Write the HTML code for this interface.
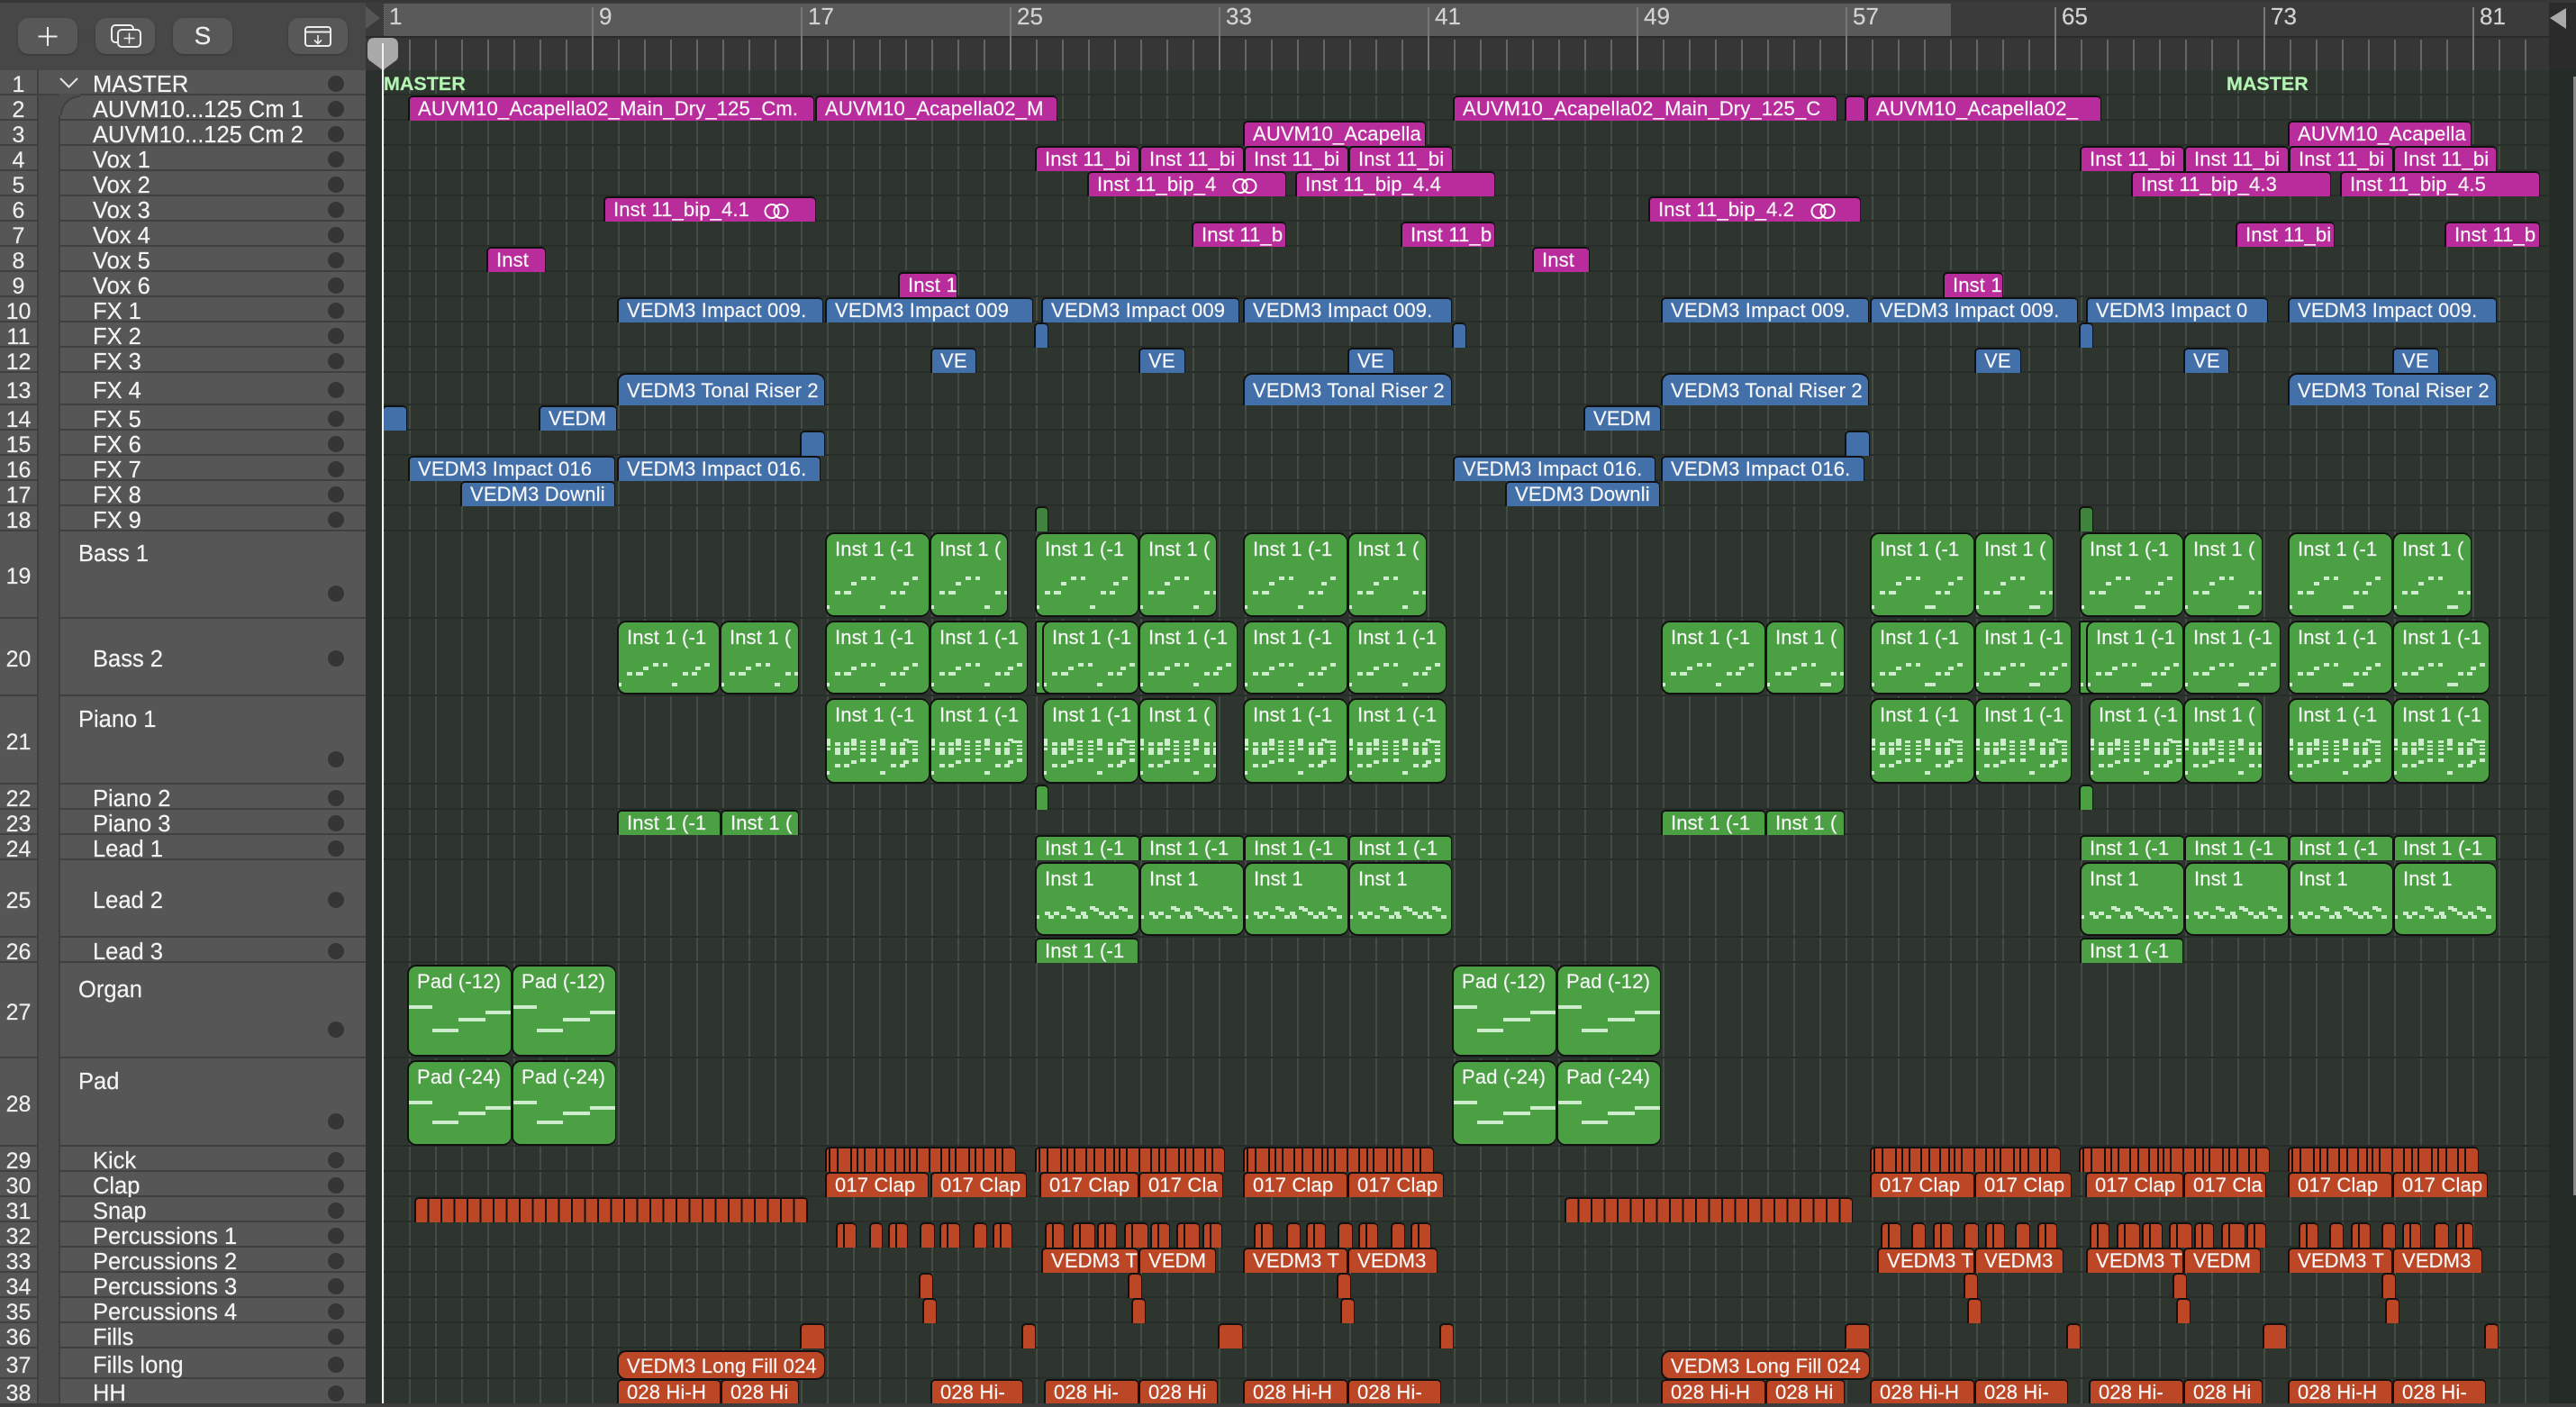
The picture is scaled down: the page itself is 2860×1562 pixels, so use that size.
<!DOCTYPE html>
<html lang="en"><head><meta charset="utf-8"><title>Arrange</title>
<style>
html,body{margin:0;padding:0;background:#3c3c3c}
#p{position:relative;width:2860px;height:1562px;overflow:hidden;background:#2d352e;font-family:"Liberation Sans",sans-serif;color:#f4f4f4;-webkit-text-stroke:.2px currentColor}
#p>*{position:absolute}
.btn{top:20px;width:66px;height:40px;border-radius:12px;background:#585858;box-shadow:0 1px 2px #343434}
.l{position:absolute;left:0;width:406px;box-sizing:border-box;border-bottom:2px solid #404040;background:#565656;font-size:25.5px}
.l s{position:absolute;left:0;width:41px;text-align:center;text-decoration:none;top:2px;color:#eee;font-size:25px}
.l u{position:absolute;left:103px;top:2px;text-decoration:none;white-space:nowrap}
.l u.a{left:87px}
.l em{position:absolute;left:364px;top:calc(50% - 7px);width:18px;height:18px;border-radius:50%;background:#353535}
.n{position:absolute;top:3px;font-size:26px;line-height:30px;color:#d2d2d2}
.tk{position:absolute;top:8px;height:70px;width:2px;background:#777}
.r{position:absolute;left:-1px;right:0;box-sizing:border-box;border-bottom:2px solid #272d28}
.r i{position:absolute;top:0;bottom:-2px;box-sizing:border-box;border:solid #111;border-width:2px 1px 0 2px;border-radius:5px 5px 0 0;font-style:normal;font-size:22px;line-height:26px;padding-left:9px;white-space:nowrap;overflow:hidden;color:#f6f6f6;letter-spacing:.15px}
.r i.t{border-width:2px 1px 2px 2px;border-radius:10px;line-height:34px;bottom:auto}
.r i.u{line-height:35px;border-radius:10px 10px 0 0}
.m{background:#b92c9c}.b{background:#4470aa}.g{background:#4ca044}.o{background:#bb4726}
.pc{background:linear-gradient(90deg,#bb4726 0 6px,#111 6px 8px,#bb4726 8px)}
.nt{position:absolute;left:-2px;top:-2px;width:130px;height:100px}
.lp{position:absolute;top:8px;width:30px;height:17px}
.mt{position:absolute;top:2px;font-size:21.5px;line-height:26px;font-weight:700;color:#b3f5b3}
</style></head><body>
<div id="p">
<svg width="0" height="0" style="position:absolute"><defs>
<path id="B" fill="#cdeccb" d="M0 81h5v4h-5zM61 81h6v4h-6zM11 65h6v4h-6zM21 65h8v4h-8zM29 55h6v4h-6zM40 49h6v4h-6zM51 49h5v4h-5zM73 65h6v4h-6zM83 65h6v4h-6zM87 55h6v4h-6zM97 49h6v4h-6z"/>
<path id="B2" fill="#cdeccb" d="M0 81h5v4h-5zM61 81h12v4h-12zM11 65h6v4h-6zM21 65h8v4h-8zM29 55h6v4h-6zM40 49h6v4h-6zM51 49h5v4h-5zM73 65h6v4h-6zM83 65h6v4h-6zM87 55h6v4h-6zM97 49h6v4h-6z"/>
<path id="C" fill="#cdeccb" d="M0 69h5v4h-5zM61 69h6v4h-6zM11 57h6v4h-6zM21 57h8v4h-8zM29 51h6v4h-6zM40 47h6v4h-6zM51 47h5v4h-5zM73 57h6v4h-6zM83 57h6v4h-6zM87 51h6v4h-6zM97 47h6v4h-6z"/>
<path id="C2" fill="#cdeccb" d="M0 69h5v4h-5zM61 69h12v4h-12zM11 57h6v4h-6zM21 57h8v4h-8zM29 51h6v4h-6zM40 47h6v4h-6zM51 47h5v4h-5zM73 57h6v4h-6zM83 57h6v4h-6zM87 51h6v4h-6zM97 47h6v4h-6z"/>
<path id="P" fill="#cdeccb" d="M2 45h4v8h-4zM2 55h4v3h-4zM11 49h6v4h-6zM11 55h6v8h-6zM21 49h6v4h-6zM21 55h6v8h-6zM29 45h6v8h-6zM29 55h6v3h-6zM39 47h6v3h-6zM39 52h6v2h-6zM39 56h6v2h-6zM39 60h6v3h-6zM51 47h6v3h-6zM51 52h6v2h-6zM51 56h6v2h-6zM51 60h6v3h-6zM61 45h6v8h-6zM61 55h6v3h-6zM73 49h6v4h-6zM73 55h6v8h-6zM83 49h6v4h-6zM83 55h6v8h-6zM87 45h6v3h-6zM91 47h6v3h-6zM97 47h6v3h-6zM97 52h6v2h-6zM97 56h6v2h-6zM97 60h6v3h-6zM11 73h6v4h-6zM21 73h6v4h-6zM29 69h6v4h-6zM39 67h6v4h-6zM51 67h6v4h-6zM73 73h6v4h-6zM83 73h6v4h-6zM87 69h6v4h-6zM97 67h6v4h-6zM0 81h5v4h-5zM61 81h6v4h-6z"/>
<path id="L" fill="#cdeccb" d="M1 59h4v4h-4zM11 55h6v4h-6zM15 59h6v4h-6zM21 55h6v4h-6zM29 59h6v4h-6zM35 49h6v4h-6zM39 51h6v4h-6zM45 59h6v4h-6zM51 55h6v4h-6zM53 59h6v4h-6zM61 49h6v4h-6zM65 51h6v4h-6zM71 55h6v4h-6zM77 59h6v4h-6zM83 55h6v4h-6zM87 59h6v4h-6zM93 49h6v4h-6zM97 51h6v4h-6zM103 59h6v4h-6z"/>
<path id="A" fill="#cdeccb" d="M0 45h28v4H0zM28 71h29v4H28zM57 59h30v4H57zM87 51h28v4H87z"/>
<path id="E" fill="#cdeccb" d="M0 45h28v4H0zM28 67h29v4H28zM57 57h30v4H57zM87 51h28v4H87z"/>
<path id="K" stroke="#111" stroke-width="2" d="M5 0v30M14 0v30M29 0v30M36 0v30M44 0v30M57 0v30M66 0v30M78 0v30M88 0v30M94 0v30M102 0v30M116 0v30M129 0v30M138 0v30M145 0v30M160 0v30M167 0v30M176 0v30M189 0v30M197 0v30"/>
<g id="Q" fill="none" stroke="#fff" stroke-width="2"><circle cx="9" cy="8.500" r="7.500"/><circle cx="19" cy="8.500" r="7.500"/></g>
</defs></svg>

<!-- toolbar -->
<div style="left:0;top:0;width:406px;height:78px;background:#474747"></div>
<div style="left:0;top:0;width:2860px;height:3px;background:#373737"></div>
<div class="btn" style="left:20px"></div>
<div class="btn" style="left:106px"></div>
<div class="btn" style="left:192px"></div>
<div class="btn" style="left:320px"></div>
<svg style="left:0;top:0" width="406" height="78" fill="none" stroke="#ececec" stroke-width="2">
<path d="M42.500 40.500h21M53 30v21"/>
<path d="M148 33v-1a4 4 0 0 0-4-4h-16a4 4 0 0 0-4 4v11a4 4 0 0 0 4 4h3"/>
<rect x="131" y="33" width="25" height="19" rx="4"/>
<path d="M143.500 36.500v12M137.500 42.500h12" stroke-width="1.600"/>
<rect x="339" y="30" width="28" height="21" rx="3"/>
<path d="M339 35.500h28"/>
<path d="M353 39v9M349 44.500l4 4 4-4" stroke-width="1.600"/>
</svg>
<div style="left:192px;top:20px;width:66px;height:40px;line-height:40px;text-align:center;font-size:28px;color:#efefef">S</div>

<!-- ruler -->
<div style="left:406px;top:3px;width:2454px;height:37px;background:#3b3b3b"></div>
<div style="left:425px;top:4px;width:1741px;height:36px;background:#5a5a5a"></div>
<div style="left:406px;top:40px;width:2454px;height:38px;background:#363636;border-top:2px solid #2a2a2a;box-sizing:border-box"></div>
<div style="left:425px;top:44px;width:2406px;height:34px;background:repeating-linear-gradient(90deg,#666 0 2px,transparent 2px 29px)"></div>
<div class="tk" style="left:657px"></div><div class="tk" style="left:889px"></div><div class="tk" style="left:1121px"></div><div class="tk" style="left:1353px"></div><div class="tk" style="left:1585px"></div><div class="tk" style="left:1817px"></div><div class="tk" style="left:2049px"></div><div class="tk" style="left:2281px"></div><div class="tk" style="left:2513px"></div><div class="tk" style="left:2745px"></div>
<span class="n" style="left:432px">1</span><span class="n" style="left:665px">9</span><span class="n" style="left:897px">17</span><span class="n" style="left:1129px">25</span><span class="n" style="left:1361px">33</span><span class="n" style="left:1593px">41</span><span class="n" style="left:1825px">49</span><span class="n" style="left:2057px">57</span><span class="n" style="left:2289px">65</span><span class="n" style="left:2521px">73</span><span class="n" style="left:2753px">81</span>

<!-- grid -->
<div style="left:425px;top:78px;width:2406px;height:1480px;background:repeating-linear-gradient(90deg,#444d45 0 2px,transparent 2px 29px)"></div>

<!-- regions -->
<div class="r" style="top:78px;height:28px"><span class="mt" style="left:427px">MASTER</span><span class="mt" style="left:2473px">MASTER</span></div>
<div class="r" style="top:106px;height:28px"><i class="m" style="left:454px;width:451px">AUVM10_Acapella02_Main_Dry_125_Cm.</i><i class="m" style="left:906px;width:269px">AUVM10_Acapella02_M</i><i class="m" style="left:1614px;width:427px">AUVM10_Acapella02_Main_Dry_125_C</i><i class="m" style="left:2049px;width:23px"></i><i class="m" style="left:2073px;width:261px">AUVM10_Acapella02_</i></div>
<div class="r" style="top:134px;height:28px"><i class="m" style="left:1381px;width:203px">AUVM10_Acapella</i><i class="m" style="left:2541px;width:204px">AUVM10_Acapella</i></div>
<div class="r" style="top:162px;height:28px"><i class="m" style="left:1150px;width:116px">Inst 11_bi</i><i class="m" style="left:1266px;width:116px">Inst 11_bi</i><i class="m" style="left:1382px;width:116px">Inst 11_bi</i><i class="m" style="left:1498px;width:116px">Inst 11_bi</i><i class="m" style="left:2310px;width:116px">Inst 11_bi</i><i class="m" style="left:2426px;width:116px">Inst 11_bi</i><i class="m" style="left:2542px;width:116px">Inst 11_bi</i><i class="m" style="left:2658px;width:115px">Inst 11_bi</i></div>
<div class="r" style="top:190px;height:28px"><i class="m" style="left:1208px;width:221px">Inst 11_bip_4</i><svg class="lp" style="left:1369px"><use href="#Q"/></svg><i class="m" style="left:1439px;width:222px">Inst 11_bip_4.4</i><i class="m" style="left:2367px;width:222px">Inst 11_bip_4.3</i><i class="m" style="left:2599px;width:222px">Inst 11_bip_4.5</i></div>
<div class="r" style="top:218px;height:28px"><i class="m" style="left:671px;width:236px">Inst 11_bip_4.1</i><svg class="lp" style="left:849px"><use href="#Q"/></svg><i class="m" style="left:1831px;width:236px">Inst 11_bip_4.2</i><svg class="lp" style="left:2011px"><use href="#Q"/></svg></div>
<div class="r" style="top:246px;height:28px"><i class="m" style="left:1324px;width:105px">Inst 11_b</i><i class="m" style="left:1556px;width:105px">Inst 11_b</i><i class="m" style="left:2483px;width:110px">Inst 11_bi</i><i class="m" style="left:2715px;width:106px">Inst 11_b</i></div>
<div class="r" style="top:274px;height:28px"><i class="m" style="left:541px;width:66px">Inst</i><i class="m" style="left:1702px;width:64px">Inst</i></div>
<div class="r" style="top:302px;height:28px"><i class="m" style="left:998px;width:66px">Inst 1</i><i class="m" style="left:2158px;width:67px">Inst 1</i></div>
<div class="r" style="top:330px;height:28px"><i class="b" style="left:686px;width:229px">VEDM3 Impact 009.</i><i class="b" style="left:917px;width:231px">VEDM3 Impact 009</i><i class="b" style="left:1157px;width:220px">VEDM3 Impact 009</i><i class="b" style="left:1381px;width:232px">VEDM3 Impact 009.</i><i class="b" style="left:1845px;width:231px">VEDM3 Impact 009.</i><i class="b" style="left:2077px;width:231px">VEDM3 Impact 009.</i><i class="b" style="left:2317px;width:202px">VEDM3 Impact 0</i><i class="b" style="left:2541px;width:232px">VEDM3 Impact 009.</i></div>
<div class="r" style="top:358px;height:28px"><i class="b" style="left:1149px;width:16px"></i><i class="b" style="left:1613px;width:16px"></i><i class="b" style="left:2309px;width:16px"></i></div>
<div class="r" style="top:386px;height:28px"><i class="b" style="left:1034px;width:51px">VE</i><i class="b" style="left:1265px;width:52px">VE</i><i class="b" style="left:1497px;width:52px">VE</i><i class="b" style="left:2193px;width:52px">VE</i><i class="b" style="left:2425px;width:51px">VE</i><i class="b" style="left:2657px;width:52px">VE</i></div>
<div class="r" style="top:414px;height:36px"><i class="b u" style="left:686px;width:231px">VEDM3 Tonal Riser 2</i><i class="b u" style="left:1381px;width:232px">VEDM3 Tonal Riser 2</i><i class="b u" style="left:1845px;width:231px">VEDM3 Tonal Riser 2</i><i class="b u" style="left:2541px;width:232px">VEDM3 Tonal Riser 2</i></div>
<div class="r" style="top:450px;height:28px"><i class="b" style="left:425px;width:28px"></i><i class="b" style="left:599px;width:87px">VEDM</i><i class="b" style="left:1759px;width:86px">VEDM</i></div>
<div class="r" style="top:478px;height:28px"><i class="b" style="left:889px;width:28px"></i><i class="b" style="left:2049px;width:28px"></i></div>
<div class="r" style="top:506px;height:28px"><i class="b" style="left:454px;width:230px">VEDM3 Impact 016</i><i class="b" style="left:686px;width:226px">VEDM3 Impact 016.</i><i class="b" style="left:1614px;width:225px">VEDM3 Impact 016.</i><i class="b" style="left:1845px;width:226px">VEDM3 Impact 016.</i></div>
<div class="r" style="top:534px;height:28px"><i class="b" style="left:512px;width:172px">VEDM3 Downli</i><i class="b" style="left:1672px;width:172px">VEDM3 Downli</i></div>
<div class="r" style="top:562px;height:28px"><i class="g" style="left:1150px;width:15px;background:#3f833c"></i><i class="g" style="left:2309px;width:16px;background:#3f833c"></i></div>

<div class="r" style="top:590px;height:97px">
<i class="g t" style="left:917px;width:116px;top:1px;height:94px">Inst 1 (-1<svg class="nt"><use href="#B"/></svg></i>
<i class="g t" style="left:1033px;width:87px;top:1px;height:94px">Inst 1 (<svg class="nt"><use href="#B"/></svg></i>
<i class="g t" style="left:1150px;width:115px;top:1px;height:94px">Inst 1 (-1<svg class="nt"><use href="#B"/></svg></i>
<i class="g t" style="left:1265px;width:87px;top:1px;height:94px">Inst 1 (<svg class="nt"><use href="#B"/></svg></i>
<i class="g t" style="left:1381px;width:116px;top:1px;height:94px">Inst 1 (-1<svg class="nt"><use href="#B"/></svg></i>
<i class="g t" style="left:1497px;width:88px;top:1px;height:94px">Inst 1 (<svg class="nt"><use href="#B"/></svg></i>
<i class="g t" style="left:2077px;width:116px;top:1px;height:94px">Inst 1 (-1<svg class="nt"><use href="#B2"/></svg></i>
<i class="g t" style="left:2193px;width:88px;top:1px;height:94px">Inst 1 (<svg class="nt"><use href="#B2"/></svg></i>
<i class="g t" style="left:2310px;width:115px;top:1px;height:94px">Inst 1 (-1<svg class="nt"><use href="#B2"/></svg></i>
<i class="g t" style="left:2425px;width:88px;top:1px;height:94px">Inst 1 (<svg class="nt"><use href="#B2"/></svg></i>
<i class="g t" style="left:2541px;width:116px;top:1px;height:94px">Inst 1 (-1<svg class="nt"><use href="#B2"/></svg></i>
<i class="g t" style="left:2657px;width:88px;top:1px;height:94px">Inst 1 (<svg class="nt"><use href="#B2"/></svg></i>
</div>
<div class="r" style="top:687px;height:86px">
<i class="g t" style="left:686px;width:114px;top:2px;height:82px">Inst 1 (-1<svg class="nt"><use href="#C"/></svg></i>
<i class="g t" style="left:800px;width:88px;top:2px;height:82px">Inst 1 (<svg class="nt"><use href="#C"/></svg></i>
<i class="g t" style="left:917px;width:116px;top:2px;height:82px">Inst 1 (-1<svg class="nt"><use href="#C"/></svg></i>
<i class="g t" style="left:1033px;width:109px;top:2px;height:82px">Inst 1 (-1<svg class="nt"><use href="#C"/></svg></i>
<i class="g t" style="left:1150px;width:20px;top:2px;height:82px;border-radius:3px"><svg class="nt"><use href="#C"/></svg></i>
<i class="g t" style="left:1158px;width:107px;top:2px;height:82px">Inst 1 (-1<svg class="nt"><use href="#C"/></svg></i>
<i class="g t" style="left:1265px;width:110px;top:2px;height:82px">Inst 1 (-1<svg class="nt"><use href="#C"/></svg></i>
<i class="g t" style="left:1381px;width:116px;top:2px;height:82px">Inst 1 (-1<svg class="nt"><use href="#C"/></svg></i>
<i class="g t" style="left:1497px;width:110px;top:2px;height:82px">Inst 1 (-1<svg class="nt"><use href="#C"/></svg></i>
<i class="g t" style="left:1845px;width:116px;top:2px;height:82px">Inst 1 (-1<svg class="nt"><use href="#C"/></svg></i>
<i class="g t" style="left:1961px;width:88px;top:2px;height:82px">Inst 1 (<svg class="nt"><use href="#C2"/></svg></i>
<i class="g t" style="left:2077px;width:116px;top:2px;height:82px">Inst 1 (-1<svg class="nt"><use href="#C2"/></svg></i>
<i class="g t" style="left:2193px;width:108px;top:2px;height:82px">Inst 1 (-1<svg class="nt"><use href="#C2"/></svg></i>
<i class="g t" style="left:2309px;width:20px;top:2px;height:82px;border-radius:3px"><svg class="nt"><use href="#C2"/></svg></i>
<i class="g t" style="left:2317px;width:108px;top:2px;height:82px">Inst 1 (-1<svg class="nt"><use href="#C2"/></svg></i>
<i class="g t" style="left:2425px;width:108px;top:2px;height:82px">Inst 1 (-1<svg class="nt"><use href="#C2"/></svg></i>
<i class="g t" style="left:2541px;width:116px;top:2px;height:82px">Inst 1 (-1<svg class="nt"><use href="#C2"/></svg></i>
<i class="g t" style="left:2657px;width:108px;top:2px;height:82px">Inst 1 (-1<svg class="nt"><use href="#C2"/></svg></i>
</div>
<div class="r" style="top:773px;height:98px">
<i class="g t" style="left:917px;width:116px;top:2px;height:95px">Inst 1 (-1<svg class="nt"><use href="#P"/></svg></i>
<i class="g t" style="left:1033px;width:109px;top:2px;height:95px">Inst 1 (-1<svg class="nt"><use href="#P"/></svg></i>
<i class="g t" style="left:1158px;width:107px;top:2px;height:95px">Inst 1 (-1<svg class="nt"><use href="#P"/></svg></i>
<i class="g t" style="left:1265px;width:87px;top:2px;height:95px">Inst 1 (<svg class="nt"><use href="#P"/></svg></i>
<i class="g t" style="left:1381px;width:116px;top:2px;height:95px">Inst 1 (-1<svg class="nt"><use href="#P"/></svg></i>
<i class="g t" style="left:1497px;width:110px;top:2px;height:95px">Inst 1 (-1<svg class="nt"><use href="#P"/></svg></i>
<i class="g t" style="left:2077px;width:116px;top:2px;height:95px">Inst 1 (-1<svg class="nt"><use href="#P"/></svg></i>
<i class="g t" style="left:2193px;width:108px;top:2px;height:95px">Inst 1 (-1<svg class="nt"><use href="#P"/></svg></i>
<i class="g t" style="left:2320px;width:105px;top:2px;height:95px">Inst 1 (-1<svg class="nt"><use href="#P"/></svg></i>
<i class="g t" style="left:2425px;width:88px;top:2px;height:95px">Inst 1 (<svg class="nt"><use href="#P"/></svg></i>
<i class="g t" style="left:2541px;width:116px;top:2px;height:95px">Inst 1 (-1<svg class="nt"><use href="#P"/></svg></i>
<i class="g t" style="left:2657px;width:108px;top:2px;height:95px">Inst 1 (-1<svg class="nt"><use href="#P"/></svg></i>
</div>
<div class="r" style="top:871px;height:28px"><i class="g" style="left:1150px;width:15px"></i><i class="g" style="left:2309px;width:16px"></i></div>
<div class="r" style="top:899px;height:28px"><i class="g" style="left:686px;width:115px">Inst 1 (-1</i><i class="g" style="left:801px;width:87px">Inst 1 (</i><i class="g" style="left:1845px;width:116px">Inst 1 (-1</i><i class="g" style="left:1961px;width:88px">Inst 1 (</i></div>
<div class="r" style="top:927px;height:28px"><i class="g" style="left:1150px;width:116px">Inst 1 (-1</i><i class="g" style="left:1266px;width:116px">Inst 1 (-1</i><i class="g" style="left:1382px;width:116px">Inst 1 (-1</i><i class="g" style="left:1498px;width:115px">Inst 1 (-1</i><i class="g" style="left:2310px;width:116px">Inst 1 (-1</i><i class="g" style="left:2426px;width:116px">Inst 1 (-1</i><i class="g" style="left:2542px;width:116px">Inst 1 (-1</i><i class="g" style="left:2658px;width:115px">Inst 1 (-1</i></div>
<div class="r" style="top:955px;height:86px">
<i class="g t" style="left:1150px;width:116px;top:2px;height:82px">Inst 1<svg class="nt"><use href="#L"/></svg></i>
<i class="g t" style="left:1266px;width:116px;top:2px;height:82px">Inst 1<svg class="nt"><use href="#L"/></svg></i>
<i class="g t" style="left:1382px;width:116px;top:2px;height:82px">Inst 1<svg class="nt"><use href="#L"/></svg></i>
<i class="g t" style="left:1498px;width:115px;top:2px;height:82px">Inst 1<svg class="nt"><use href="#L"/></svg></i>
<i class="g t" style="left:2310px;width:116px;top:2px;height:82px">Inst 1<svg class="nt"><use href="#L"/></svg></i>
<i class="g t" style="left:2426px;width:116px;top:2px;height:82px">Inst 1<svg class="nt"><use href="#L"/></svg></i>
<i class="g t" style="left:2542px;width:116px;top:2px;height:82px">Inst 1<svg class="nt"><use href="#L"/></svg></i>
<i class="g t" style="left:2658px;width:115px;top:2px;height:82px">Inst 1<svg class="nt"><use href="#L"/></svg></i>
</div>
<div class="r" style="top:1041px;height:28px"><i class="g" style="left:1150px;width:115px">Inst 1 (-1</i><i class="g" style="left:2310px;width:115px">Inst 1 (-1</i></div>
<div class="r" style="top:1069px;height:106px">
<i class="g t" style="left:453px;width:116px;top:2px;height:102px">Pad (-12)<svg class="nt"><use href="#A"/></svg></i>
<i class="g t" style="left:569px;width:116px;top:2px;height:102px">Pad (-12)<svg class="nt"><use href="#A"/></svg></i>
<i class="g t" style="left:1613px;width:116px;top:2px;height:102px">Pad (-12)<svg class="nt"><use href="#A"/></svg></i>
<i class="g t" style="left:1729px;width:116px;top:2px;height:102px">Pad (-12)<svg class="nt"><use href="#A"/></svg></i>
</div>
<div class="r" style="top:1175px;height:98px">
<i class="g t" style="left:453px;width:116px;top:2px;height:95px">Pad (-24)<svg class="nt"><use href="#E"/></svg></i>
<i class="g t" style="left:569px;width:116px;top:2px;height:95px">Pad (-24)<svg class="nt"><use href="#E"/></svg></i>
<i class="g t" style="left:1613px;width:116px;top:2px;height:95px">Pad (-24)<svg class="nt"><use href="#E"/></svg></i>
<i class="g t" style="left:1729px;width:116px;top:2px;height:95px">Pad (-24)<svg class="nt"><use href="#E"/></svg></i>
</div>
<div class="r" style="top:1273px;height:28px">
<i class="o" style="left:917px;width:212px;padding:0"><svg class="nt" style="width:212px;height:30px"><use href="#K"/></svg></i>
<i class="o" style="left:1150px;width:211px;padding:0"><svg class="nt" style="width:212px;height:30px"><use href="#K"/></svg></i>
<i class="o" style="left:1381px;width:212px;padding:0"><svg class="nt" style="width:212px;height:30px"><use href="#K"/></svg></i>
<i class="o" style="left:2077px;width:212px;padding:0"><svg class="nt" style="width:212px;height:30px"><use href="#K"/></svg></i>
<i class="o" style="left:2309px;width:212px;padding:0"><svg class="nt" style="width:212px;height:30px"><use href="#K"/></svg></i>
<i class="o" style="left:2541px;width:212px;padding:0"><svg class="nt" style="width:212px;height:30px"><use href="#K"/></svg></i>
</div>
<div class="r" style="top:1301px;height:28px"><i class="o" style="left:917px;width:115px">017 Clap</i><i class="o" style="left:1034px;width:107px">017 Clap</i><i class="o" style="left:1155px;width:110px">017 Clap</i><i class="o" style="left:1265px;width:94px">017 Cla</i><i class="o" style="left:1381px;width:116px">017 Clap</i><i class="o" style="left:1497px;width:107px">017 Clap</i><i class="o" style="left:2077px;width:116px">017 Clap</i><i class="o" style="left:2193px;width:108px">017 Clap</i><i class="o" style="left:2316px;width:109px">017 Clap</i><i class="o" style="left:2425px;width:92px">017 Cla</i><i class="o" style="left:2541px;width:116px">017 Clap</i><i class="o" style="left:2657px;width:106px">017 Clap</i></div>
<div class="r" style="top:1329px;height:28px"><i class="o" style="left:461px;width:437px;padding:0;background:repeating-linear-gradient(90deg,#bb4726 0 12.600px,#111 12.600px 14.500px)"></i><i class="o" style="left:1738px;width:320px;padding:0;background:repeating-linear-gradient(90deg,#bb4726 0 12.600px,#111 12.600px 14.500px)"></i></div>
<div class="r" style="top:1357px;height:28px">
<i class="o pc" style="left:929px;width:23px"></i><i class="o" style="left:966px;width:15px"></i><i class="o pc" style="left:987px;width:22px"></i><i class="o" style="left:1022px;width:17px"></i><i class="o pc" style="left:1044px;width:23px"></i><i class="o" style="left:1081px;width:16px"></i><i class="o pc" style="left:1103px;width:22px"></i>
<i class="o pc" style="left:1161px;width:22px"></i><i class="o pc" style="left:1191px;width:26px"></i><i class="o pc" style="left:1219px;width:22px"></i><i class="o pc" style="left:1249px;width:27px"></i><i class="o pc" style="left:1278px;width:22px"></i><i class="o pc" style="left:1307px;width:26px"></i><i class="o pc" style="left:1336px;width:22px"></i>
<i class="o pc" style="left:1393px;width:22px"></i><i class="o" style="left:1429px;width:16px"></i><i class="o pc" style="left:1451px;width:22px"></i><i class="o" style="left:1486px;width:17px"></i><i class="o pc" style="left:1509px;width:22px"></i><i class="o" style="left:1545px;width:16px"></i><i class="o pc" style="left:1567px;width:23px"></i>
<i class="o pc" style="left:2089px;width:23px"></i><i class="o" style="left:2123px;width:16px"></i><i class="o pc" style="left:2147px;width:23px"></i><i class="o" style="left:2181px;width:17px"></i><i class="o pc" style="left:2205px;width:22px"></i><i class="o" style="left:2238px;width:17px"></i><i class="o pc" style="left:2263px;width:22px"></i>
<i class="o pc" style="left:2321px;width:22px"></i><i class="o pc" style="left:2351px;width:26px"></i><i class="o pc" style="left:2379px;width:23px"></i><i class="o pc" style="left:2409px;width:26px"></i><i class="o pc" style="left:2437px;width:22px"></i><i class="o pc" style="left:2467px;width:27px"></i><i class="o pc" style="left:2495px;width:22px"></i>
<i class="o pc" style="left:2553px;width:22px"></i><i class="o" style="left:2587px;width:16px"></i><i class="o pc" style="left:2611px;width:22px"></i><i class="o" style="left:2645px;width:16px"></i><i class="o pc" style="left:2668px;width:21px"></i><i class="o" style="left:2703px;width:17px"></i><i class="o pc" style="left:2727px;width:20px"></i>
</div>
<div class="r" style="top:1385px;height:28px"><i class="o" style="left:1157px;width:108px">VEDM3 T</i><i class="o" style="left:1265px;width:86px">VEDM</i><i class="o" style="left:1381px;width:116px">VEDM3 T</i><i class="o" style="left:1497px;width:100px">VEDM3</i><i class="o" style="left:2085px;width:108px">VEDM3 T</i><i class="o" style="left:2193px;width:99px">VEDM3</i><i class="o" style="left:2317px;width:108px">VEDM3 T</i><i class="o" style="left:2425px;width:86px">VEDM</i><i class="o" style="left:2541px;width:116px">VEDM3 T</i><i class="o" style="left:2657px;width:100px">VEDM3</i></div>
<div class="r" style="top:1413px;height:28px"><i class="o" style="left:1021px;width:16px"></i><i class="o" style="left:1253px;width:16px"></i><i class="o" style="left:1485px;width:16px"></i><i class="o" style="left:2181px;width:16px"></i><i class="o" style="left:2413px;width:16px"></i><i class="o" style="left:2645px;width:16px"></i></div>
<div class="r" style="top:1441px;height:28px"><i class="o" style="left:1025px;width:16px"></i><i class="o" style="left:1257px;width:16px"></i><i class="o" style="left:1489px;width:16px"></i><i class="o" style="left:2185px;width:16px"></i><i class="o" style="left:2417px;width:16px"></i><i class="o" style="left:2649px;width:16px"></i></div>
<div class="r" style="top:1469px;height:28px"><i class="o" style="left:889px;width:28px"></i><i class="o" style="left:1135px;width:16px"></i><i class="o" style="left:1353px;width:28px"></i><i class="o" style="left:1599px;width:16px"></i><i class="o" style="left:2049px;width:28px"></i><i class="o" style="left:2295px;width:16px"></i><i class="o" style="left:2513px;width:27px"></i><i class="o" style="left:2759px;width:16px"></i></div>
<div class="r" style="top:1497px;height:34px"><i class="o t" style="left:686px;width:231px;top:2px;height:33px;line-height:32px">VEDM3 Long Fill 024</i><i class="o t" style="left:1845px;width:232px;top:2px;height:33px;line-height:32px">VEDM3 Long Fill 024</i></div>
<div class="r" style="top:1531px;height:27px;border-bottom:0"><i class="o" style="left:686px;width:115px;bottom:0">028 Hi-H</i><i class="o" style="left:801px;width:87px;bottom:0">028 Hi</i><i class="o" style="left:1034px;width:103px;bottom:0">028 Hi-</i><i class="o" style="left:1160px;width:105px;bottom:0">028 Hi-</i><i class="o" style="left:1265px;width:88px;bottom:0">028 Hi</i><i class="o" style="left:1381px;width:116px;bottom:0">028 Hi-H</i><i class="o" style="left:1497px;width:104px;bottom:0">028 Hi-</i><i class="o" style="left:1845px;width:116px;bottom:0">028 Hi-H</i><i class="o" style="left:1961px;width:88px;bottom:0">028 Hi</i><i class="o" style="left:2077px;width:116px;bottom:0">028 Hi-H</i><i class="o" style="left:2193px;width:104px;bottom:0">028 Hi-</i><i class="o" style="left:2320px;width:105px;bottom:0">028 Hi-</i><i class="o" style="left:2425px;width:88px;bottom:0">028 Hi</i><i class="o" style="left:2541px;width:116px;bottom:0">028 Hi-H</i><i class="o" style="left:2657px;width:104px;bottom:0">028 Hi-</i></div>

<!-- side strips -->
<div style="left:406px;top:78px;width:19px;height:1480px;background:#2a302b"></div>
<div style="left:2830px;top:78px;width:30px;height:1480px;background:#252b26"></div>
<div style="left:2830px;top:3px;width:30px;height:75px;background:#2b2b2b"></div>
<div style="left:2857px;top:85px;width:3px;height:1242px;background:#8a8a8a"></div>
<svg style="left:406px;top:0" width="20" height="40"><path d="M0 7L16 20L0 32z" fill="#565656"/></svg>
<svg style="left:2825px;top:0" width="30" height="40"><path d="M24 9L6 20L24 32z" fill="#aaa"/></svg>

<!-- track list -->
<div class="l" style="top:78px;height:28px;line-height:28px"><s>1</s><u>MASTER</u><em></em></div>
<div class="l" style="top:106px;height:28px;line-height:28px"><s>2</s><u>AUVM10...125 Cm 1</u><em></em></div>
<div class="l" style="top:134px;height:28px;line-height:28px"><s>3</s><u>AUVM10...125 Cm 2</u><em></em></div>
<div class="l" style="top:162px;height:28px;line-height:28px"><s>4</s><u>Vox 1</u><em></em></div>
<div class="l" style="top:190px;height:28px;line-height:28px"><s>5</s><u>Vox 2</u><em></em></div>
<div class="l" style="top:218px;height:28px;line-height:28px"><s>6</s><u>Vox 3</u><em></em></div>
<div class="l" style="top:246px;height:28px;line-height:28px"><s>7</s><u>Vox 4</u><em></em></div>
<div class="l" style="top:274px;height:28px;line-height:28px"><s>8</s><u>Vox 5</u><em></em></div>
<div class="l" style="top:302px;height:28px;line-height:28px"><s>9</s><u>Vox 6</u><em></em></div>
<div class="l" style="top:330px;height:28px;line-height:28px"><s>10</s><u>FX 1</u><em></em></div>
<div class="l" style="top:358px;height:28px;line-height:28px"><s>11</s><u>FX 2</u><em></em></div>
<div class="l" style="top:386px;height:28px;line-height:28px"><s>12</s><u>FX 3</u><em></em></div>
<div class="l" style="top:414px;height:36px;line-height:36px"><s>13</s><u>FX 4</u><em></em></div>
<div class="l" style="top:450px;height:28px;line-height:28px"><s>14</s><u>FX 5</u><em></em></div>
<div class="l" style="top:478px;height:28px;line-height:28px"><s>15</s><u>FX 6</u><em></em></div>
<div class="l" style="top:506px;height:28px;line-height:28px"><s>16</s><u>FX 7</u><em></em></div>
<div class="l" style="top:534px;height:28px;line-height:28px"><s>17</s><u>FX 8</u><em></em></div>
<div class="l" style="top:562px;height:28px;line-height:28px"><s>18</s><u>FX 9</u><em></em></div>
<div class="l" style="top:590px;height:97px;line-height:97px"><s>19</s><u class="a" style="top:11px;line-height:28px">Bass 1</u><em style="top:60px"></em></div>
<div class="l" style="top:687px;height:86px;line-height:86px"><s>20</s><u>Bass 2</u><em></em></div>
<div class="l" style="top:773px;height:98px;line-height:98px"><s>21</s><u class="a" style="top:12px;line-height:28px">Piano 1</u><em style="top:61px"></em></div>
<div class="l" style="top:871px;height:28px;line-height:28px"><s>22</s><u>Piano 2</u><em></em></div>
<div class="l" style="top:899px;height:28px;line-height:28px"><s>23</s><u>Piano 3</u><em></em></div>
<div class="l" style="top:927px;height:28px;line-height:28px"><s>24</s><u>Lead 1</u><em></em></div>
<div class="l" style="top:955px;height:86px;line-height:86px"><s>25</s><u>Lead 2</u><em></em></div>
<div class="l" style="top:1041px;height:28px;line-height:28px"><s>26</s><u>Lead 3</u><em></em></div>
<div class="l" style="top:1069px;height:106px;line-height:106px"><s>27</s><u class="a" style="top:16px;line-height:28px">Organ</u><em style="top:65px"></em></div>
<div class="l" style="top:1175px;height:98px;line-height:98px"><s>28</s><u class="a" style="top:12px;line-height:28px">Pad</u><em style="top:61px"></em></div>
<div class="l" style="top:1273px;height:28px;line-height:28px"><s>29</s><u>Kick</u><em></em></div>
<div class="l" style="top:1301px;height:28px;line-height:28px"><s>30</s><u>Clap</u><em></em></div>
<div class="l" style="top:1329px;height:28px;line-height:28px"><s>31</s><u>Snap</u><em></em></div>
<div class="l" style="top:1357px;height:28px;line-height:28px"><s>32</s><u>Percussions 1</u><em></em></div>
<div class="l" style="top:1385px;height:28px;line-height:28px"><s>33</s><u>Percussions 2</u><em></em></div>
<div class="l" style="top:1413px;height:28px;line-height:28px"><s>34</s><u>Percussions 3</u><em></em></div>
<div class="l" style="top:1441px;height:28px;line-height:28px"><s>35</s><u>Percussions 4</u><em></em></div>
<div class="l" style="top:1469px;height:28px;line-height:28px"><s>36</s><u>Fills</u><em></em></div>
<div class="l" style="top:1497px;height:34px;line-height:34px"><s>37</s><u>Fills long</u><em></em></div>
<div class="l" style="top:1531px;height:27px;line-height:28px;border-bottom:0"><s>38</s><u>HH</u><em></em></div>
<!-- folder stack column -->
<div style="left:41px;top:106px;width:26px;height:1452px;box-sizing:border-box;background:#4d4d4d;border-left:2px solid #404040;border-right:2px solid #404040"></div>
<div style="left:41px;top:78px;width:2px;height:28px;background:#404040"></div>
<div style="left:65px;top:104px;width:24px;height:24px;background:radial-gradient(circle at 100% 100%,transparent 20px,#404040 20px 22px,#4d4d4d 22px)"></div>
<svg style="left:60px;top:78px" width="32" height="28" fill="none" stroke="#e8e8e8" stroke-width="2"><path d="M7 9l9.500 9.500L26 9"/></svg>

<!-- bottom strip -->
<div style="left:0;top:1558px;width:2860px;height:4px;background:#3c3c3c"></div>

<!-- playhead -->
<div style="left:424px;top:48px;width:2px;height:1510px;background:#f2f2f2"></div>
<div style="left:425px;top:3px;width:0;height:39px;border-left:1px dotted #222"></div>
<svg style="left:406px;top:40px" width="38" height="40"><path d="M2 10q0-8 8-8h18q8 0 8 8v12q0 3-2 5L19 38 4 27q-2-2-2-5z" fill="#a9a9a9"/><path d="M19 8v30" stroke="#f2f2f2" stroke-width="2"/></svg>
</div>
</body></html>
